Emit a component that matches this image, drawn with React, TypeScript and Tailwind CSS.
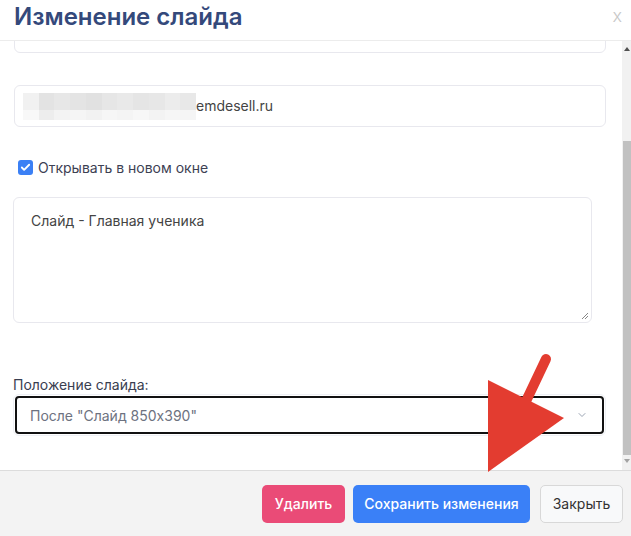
import { Check, ChevronDown } from 'lucide-react'

const blurTop = [
  'bg-[#f1f1f1]', 'bg-[#e3e3e3]', 'bg-[#e7e7e7]', 'bg-[#e4e4e4]', 'bg-[#e1e1e1]', 'bg-[#e6e6e6]',
  'bg-[#e9e9e9]', 'bg-[#e5e5e5]', 'bg-[#e7e7e7]', 'bg-[#ececec]', 'bg-[#e8e8e8]',
]
const blurBottom = [
  'bg-[#f8f8f8]', 'bg-[#ededed]', 'bg-[#f3f3f3]', 'bg-[#f5f5f5]', 'bg-[#f2f2f2]', 'bg-[#f6f6f6]',
  'bg-[#f4f4f4]', 'bg-[#f7f7f7]', 'bg-[#f3f3f3]', 'bg-[#f6f6f6]', 'bg-[#f5f5f5]',
]

function BlurredText() {
  return (
    <div className="w-[173px] flex flex-col">
      <div className="flex">
        {blurTop.map((c, i) => (
          <div key={i} className={`flex-1 h-[17px] ${c}`} />
        ))}
      </div>
      <div className="flex">
        {blurBottom.map((c, i) => (
          <div key={i} className={`flex-1 h-[10px] ${c}`} />
        ))}
      </div>
    </div>
  )
}

function Scrollbar() {
  return (
    <div className="w-[9px] bg-[#f1f1f1] flex flex-col items-center">
      <div className="mt-[6px] w-0 h-0 border-l-[3px] border-r-[3px] border-b-[4px] border-l-transparent border-r-transparent border-b-[#505050]" />
      <div className="mt-[90px] w-[8px] h-[314px] bg-[#c1c1c1] ml-[1px]" />
      <div className="mt-[4px] w-0 h-0 border-l-[3px] border-r-[3px] border-t-[4px] border-l-transparent border-r-transparent border-t-[#a3a3a3]" />
    </div>
  )
}

export default function App() {
  return (
    <div className="relative w-[631px] h-[536px] overflow-hidden bg-white flex flex-col font-['Inter','Noto_Sans',sans-serif] text-[14px] text-[#3d4153]">
      <div className="h-[41px] shrink-0 flex items-center justify-between pl-[14px] pr-[9px] border-b border-[#ececec]">
        <h1 className="text-[24px] leading-none font-semibold text-[#34497b] -mt-[6px]">Изменение слайда</h1>
        <span className="text-[18px] text-[#c8c8c8] font-light -mt-[10px]">x</span>
      </div>

      <div className="flex-1 flex overflow-hidden">
        <div className="flex-1 flex flex-col pl-[14px] pr-[16px]">
          <div className="-mt-[29px] h-[41px] shrink-0 rounded-[6px] border border-[#e8e8ee]" />

          <div className="mt-[32px] h-[42px] shrink-0 rounded-[6px] border border-[#e8e8ee] flex items-center pl-[8px]">
            <BlurredText />
            <span className="text-[#444] -mt-[1px]">emdesell.ru</span>
          </div>

          <label className="mt-[30px] flex items-center gap-[5px] pl-[4px]">
            <span className="w-[15px] h-[15px] rounded-[3px] bg-[#3b80f5] flex items-center justify-center">
              <Check className="w-[11px] h-[11px] text-white" strokeWidth={4} />
            </span>
            <span>Открывать в новом окне</span>
          </label>

          <div className="mt-[19px] mr-[14px] -ml-[1px] h-[126px] shrink-0 rounded-[6px] border border-[#e8e8ee] relative px-[17px] pt-[12px] text-[#444]">
            Слайд - Главная ученика
            <svg className="absolute right-[2px] bottom-[2px]" width="8" height="8" viewBox="0 0 8 8">
              <path d="M7 1 L1 7 M7 4 L4 7" stroke="#888" strokeWidth="1" />
            </svg>
          </div>

          <div className="mt-[51px] -ml-[1px] text-[#3a3e50]">Положение слайда:</div>

          <div className="-mt-[1px] -ml-[1px] p-[1px] rounded-[6px] border border-[#eef0f5]">
            <div className="h-[38px] rounded-[4px] border-2 border-[#111] flex items-center justify-between pl-[13px] pr-[14px] text-[#6d7280]">
              <span>После "Слайд 850x390"</span>
              <ChevronDown className="w-[12px] h-[12px] text-[#7a8599]" strokeWidth={1.5} />
            </div>
          </div>
        </div>
        <Scrollbar />
      </div>

      <div className="h-[66px] shrink-0 bg-[#f3f3f3] border-t border-[#dcdcdc] flex items-center justify-end gap-[8px] pr-[8px]">
        <button className="h-[38px] w-[83px] rounded-[5px] bg-[#ea4b77] text-white font-medium">Удалить</button>
        <button className="h-[38px] w-[177px] rounded-[5px] bg-[#3a80f7] text-white font-medium">Сохранить изменения</button>
        <button className="ml-[2px] h-[38px] w-[83px] rounded-[5px] bg-[#f8f9fa] border border-[#d8d8d8] text-[#333]">Закрыть</button>
      </div>

      <svg className="absolute left-0 top-0 pointer-events-none" width="631" height="536" viewBox="0 0 631 536">
        <line x1="546" y1="359" x2="518" y2="418" stroke="#e33c30" strokeWidth="10" strokeLinecap="round" />
        <polygon points="488,380 564,418 488,472" fill="#e33c30" />
      </svg>
    </div>
  )
}
